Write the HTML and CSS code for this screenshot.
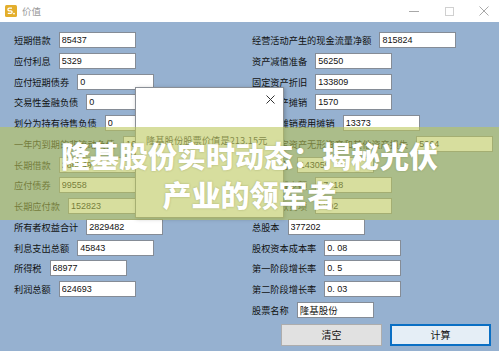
FILE: index.html
```html
<!DOCTYPE html>
<html lang="zh-CN">
<head>
    <meta charset="UTF-8">
    <meta name="viewport" content="width=device-width, initial-scale=1.0">
    <title>价值</title>
    <link rel="stylesheet" href="styles.css">
</head>
<body>
    <div class="window">
        <div class="titlebar">
            <svg class="app-icon" width="12" height="12" viewBox="0 0 12 12">
                <rect width="12" height="12" rx="1.5" fill="#e3ae2c"/>
                <path d="M7 3.2H4.2a1.3 1.3 0 0 0 0 2.6h1.6a1.3 1.3 0 0 1 0 2.6H2.8" fill="none" stroke="#fff" stroke-width="1.3"/>
                <circle cx="9" cy="8.6" r="0.9" fill="#fff"/>
            </svg>
            <span class="title">价值</span>
            <div class="controls">
                <svg width="10" height="10" viewBox="0 0 10 10"><path d="M0 5.5h10" stroke="#a8a8a8" stroke-width="1"/></svg>
                <svg width="10" height="10" viewBox="0 0 10 10"><rect x="1.5" y="1.5" width="8" height="8" fill="none" stroke="#d0d0d0" stroke-width="1"/></svg>
                <svg width="10" height="10" viewBox="0 0 10 10"><path d="M0.5 0.5l9 9M9.5 0.5l-9 9" stroke="#a8a8a8" stroke-width="1"/></svg>
            </div>
        </div>

        <div class="content">
            <div class="columns">
                <div class="col">
                    <div class="row"><label>短期借款</label><input type="text" value="85437"></div>
                    <div class="row"><label>应付利息</label><input type="text" value="5329"></div>
                    <div class="row"><label>应付短期债券</label><input type="text" value="0"></div>
                    <div class="row"><label>交易性金融负债</label><input type="text" value="0"></div>
                    <div class="row"><label>划分为持有待售负债</label><input type="text" value="0"></div>
                    <div class="row"><label>一年内到期的非流动负债</label><input type="text" value="161264"></div>
                    <div class="row"><label>长期借款</label><input type="text" value="286549"></div>
                    <div class="row"><label>应付债券</label><input type="text" value="99558"></div>
                    <div class="row"><label>长期应付款</label><input type="text" value="152823"></div>
                    <div class="row"><label>所有者权益合计</label><input type="text" value="2829482"></div>
                    <div class="row"><label>利息支出总额</label><input type="text" value="45843"></div>
                    <div class="row"><label>所得税</label><input type="text" value="68977"></div>
                    <div class="row"><label>利润总额</label><input type="text" value="624693"></div>
                </div>
                <div class="col">
                    <div class="row"><label>经营活动产生的现金流量净额</label><input type="text" value="815824"></div>
                    <div class="row"><label>资产减值准备</label><input type="text" value="56250"></div>
                    <div class="row"><label>固定资产折旧</label><input type="text" value="133809"></div>
                    <div class="row"><label>无形资产摊销</label><input type="text" value="1570"></div>
                    <div class="row"><label>长期待摊销费用摊销</label><input type="text" value="13373"></div>
                    <div class="row"><label>处置固定资产无形资产和其他资产损失</label><input type="text" value="5964"></div>
                    <div class="row"><label>财务费用</label><input type="text" value="143059"></div>
                    <div class="row"><label>存货的减少额</label><input type="text" value="47418"></div>
                    <div class="row"><label>递延税款贷项</label><input type="text" value="5292"></div>
                    <div class="row"><label>总股本</label><input type="text" value="377202"></div>
                    <div class="row"><label>股权资本成本率</label><input type="text" value="0. 08"></div>
                    <div class="row"><label>第一阶段增长率</label><input type="text" value="0. 5"></div>
                    <div class="row"><label>第二阶段增长率</label><input type="text" value="0. 03"></div>
                    <div class="row"><label>股票名称</label><input type="text" class="cjk" value="隆基股份"></div>
                </div>
            </div>
            <div class="buttons">
                <button type="button">清空</button>
                <button type="button" class="default">计算</button>
            </div>
        </div>

        <!-- message box popped over the form -->
        <div class="msgbox">
            <svg class="msg-close" width="9" height="9" viewBox="0 0 9 9"><path d="M0.5 0.5l8 8M8.5 0.5l-8 8" stroke="#333" stroke-width="1"/></svg>
            <p class="msg-text">隆基股份股票价值是213.15元</p>
        </div>

        <div class="banner">
            <div>隆基股份实时动态：揭秘光伏</div>
            <div>产业的领军者</div>
        </div>
    </div>
</body>
</html>
```

FILE: styles.css
```css
* {
    box-sizing: border-box;
}
body {
    margin: 0;
    width: 499px;
    height: 351px;
    overflow: hidden;
    font-family: "Noto Sans CJK SC", "Liberation Sans", sans-serif;
}
.window {
    position: relative;
    width: 499px;
    height: 351px;
    background: #96b1d0;
}
.titlebar {
    height: 22px;
    background: #fff;
    display: flex;
    align-items: center;
    padding-left: 5px;
}
.app-icon {
    display: block;
}
.title {
    margin-left: 5px;
    font-size: 9.5px;
    color: #9a9a9a;
}
.controls {
    margin-left: auto;
    display: flex;
    align-items: center;
    gap: 25px;
    padding-right: 10px;
}
.controls svg {
    display: block;
}
.content {
    padding: 10px 8px 0 14px;
}
.columns {
    display: grid;
    grid-template-columns: 238px 1fr;
}
.col {
    display: flex;
    flex-direction: column;
    gap: 4.75px;
}
.row {
    display: flex;
    align-items: center;
    gap: 8px;
    height: 16px;
}
.row label {
    font-size: 9.2px;
    color: #111;
    white-space: nowrap;
}
.row input {
    width: 77px;
    height: 16px;
    margin: 0;
    padding: 0 2px;
    border: 1px solid #858c96;
    background: #fff;
    font-family: "Liberation Sans", sans-serif;
    font-size: 9px;
    color: #111;
    flex-shrink: 0;
}
.row input.cjk {
    font-family: "Noto Sans CJK SC", sans-serif;
    font-size: 9.5px;
}
.buttons {
    display: flex;
    justify-content: flex-end;
    gap: 8px;
    margin-top: 6px;
}
button {
    width: 101px;
    height: 22px;
    margin: 0;
    background: #e1e1e1;
    border: 1px solid #adadad;
    font-family: "Noto Sans CJK SC", sans-serif;
    font-size: 10px;
    color: #111;
}
button.default {
    border: 2px solid #0a6fc4;
    background: #e5eef6;
}
.msgbox {
    position: absolute;
    left: 135px;
    top: 87px;
    width: 149px;
    height: 131px;
    background: #fff;
    border: 1px solid #8a8f96;
    box-shadow: 1px 1px 4px rgba(0,0,0,0.25);
}
.msg-close {
    position: absolute;
    right: 8px;
    top: 7px;
}
.msg-text {
    margin: 45px 0 0 10px;
    font-size: 9.3px;
    color: #3a3a3a;
    white-space: nowrap;
}
.banner {
    position: absolute;
    left: 0;
    right: 0;
    top: 127px;
    height: 93px;
    padding-top: 9px;
    background: rgba(186, 198, 88, 0.58);
    text-align: center;
    color: #fff;
    font-family: "Noto Sans CJK SC", sans-serif;
    font-weight: 900;
    font-size: 29px;
    line-height: 39px;
    text-shadow: 0 0 2px rgba(60,70,20,0.35);
}
```
